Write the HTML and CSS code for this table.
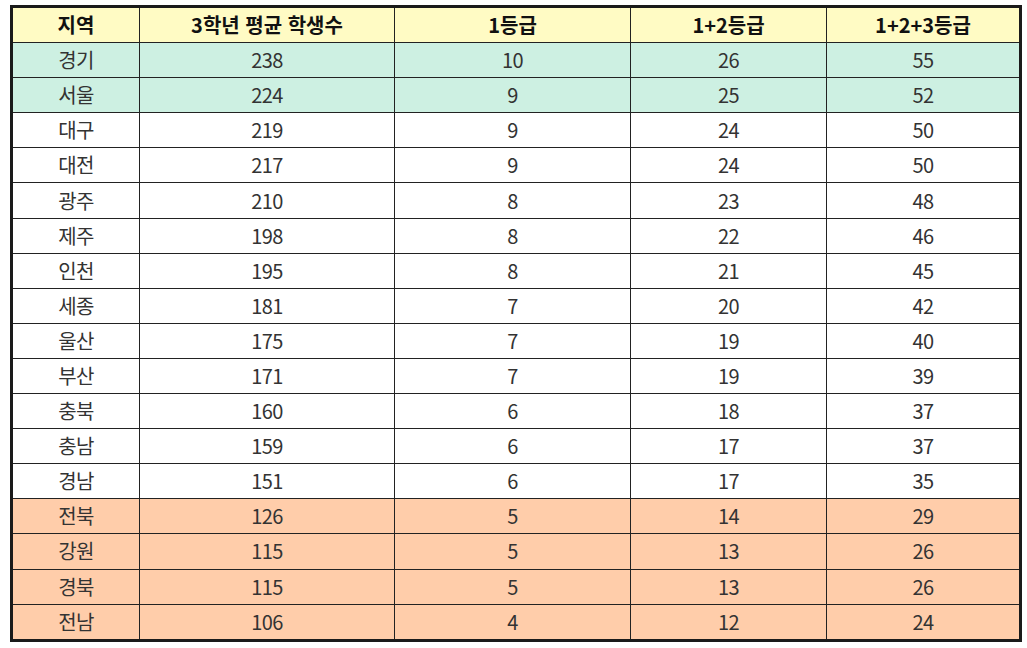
FILE: index.html
```html
<!DOCTYPE html>
<html lang="ko">
<head>
<meta charset="utf-8">
<link rel="stylesheet" href="styles.css">
</head>
<body>
<table class="grade-table">
<colgroup>
<col class="c1"><col class="c2"><col class="c3"><col class="c4"><col class="c5">
</colgroup>
<thead>
<tr class="head"><th>지역</th><th>3학년 평균 학생수</th><th>1등급</th><th>1+2등급</th><th>1+2+3등급</th></tr>
</thead>
<tbody>
<tr class="green"><td>경기</td><td>238</td><td>10</td><td>26</td><td>55</td></tr>
<tr class="green"><td>서울</td><td>224</td><td>9</td><td>25</td><td>52</td></tr>
<tr><td>대구</td><td>219</td><td>9</td><td>24</td><td>50</td></tr>
<tr><td>대전</td><td>217</td><td>9</td><td>24</td><td>50</td></tr>
<tr><td>광주</td><td>210</td><td>8</td><td>23</td><td>48</td></tr>
<tr><td>제주</td><td>198</td><td>8</td><td>22</td><td>46</td></tr>
<tr><td>인천</td><td>195</td><td>8</td><td>21</td><td>45</td></tr>
<tr><td>세종</td><td>181</td><td>7</td><td>20</td><td>42</td></tr>
<tr><td>울산</td><td>175</td><td>7</td><td>19</td><td>40</td></tr>
<tr><td>부산</td><td>171</td><td>7</td><td>19</td><td>39</td></tr>
<tr><td>충북</td><td>160</td><td>6</td><td>18</td><td>37</td></tr>
<tr><td>충남</td><td>159</td><td>6</td><td>17</td><td>37</td></tr>
<tr><td>경남</td><td>151</td><td>6</td><td>17</td><td>35</td></tr>
<tr class="peach"><td>전북</td><td>126</td><td>5</td><td>14</td><td>29</td></tr>
<tr class="peach"><td>강원</td><td>115</td><td>5</td><td>13</td><td>26</td></tr>
<tr class="peach"><td>경북</td><td>115</td><td>5</td><td>13</td><td>26</td></tr>
<tr class="peach"><td>전남</td><td>106</td><td>4</td><td>12</td><td>24</td></tr>
</tbody>
</table>
</body>
</html>
```
FILE: styles.css
```css
html, body {
  margin: 0;
  padding: 0;
  background: #ffffff;
}
body {
  padding: 5px 0 0 10px;
  font-family: "Noto Sans CJK KR", "Noto Sans", sans-serif;
}
.grade-table {
  border-collapse: collapse;
  width: 1009px;
  table-layout: fixed;
  border: 3px solid #1a1a1a;
}
.c1 { width: 128px; }
.c2 { width: 255px; }
.c3 { width: 236px; }
.c4 { width: 196px; }
.c5 { width: 194px; }
.grade-table th,
.grade-table td {
  border: 1.5px solid #222;
  height: 34.1px;
  padding: 0;
  text-align: center;
  vertical-align: middle;
  font-size: 20px;
  line-height: 1;
  letter-spacing: -0.6px;
}
.grade-table th {
  background: #fffbc4;
  color: #111;
  font-weight: 700;
  font-size: 20px;
  letter-spacing: 0;
}
.grade-table td {
  color: #333;
  font-weight: 400;
}
.green td { background: #cdf0e2; }
.peach td { background: #ffcdaa; }
```
